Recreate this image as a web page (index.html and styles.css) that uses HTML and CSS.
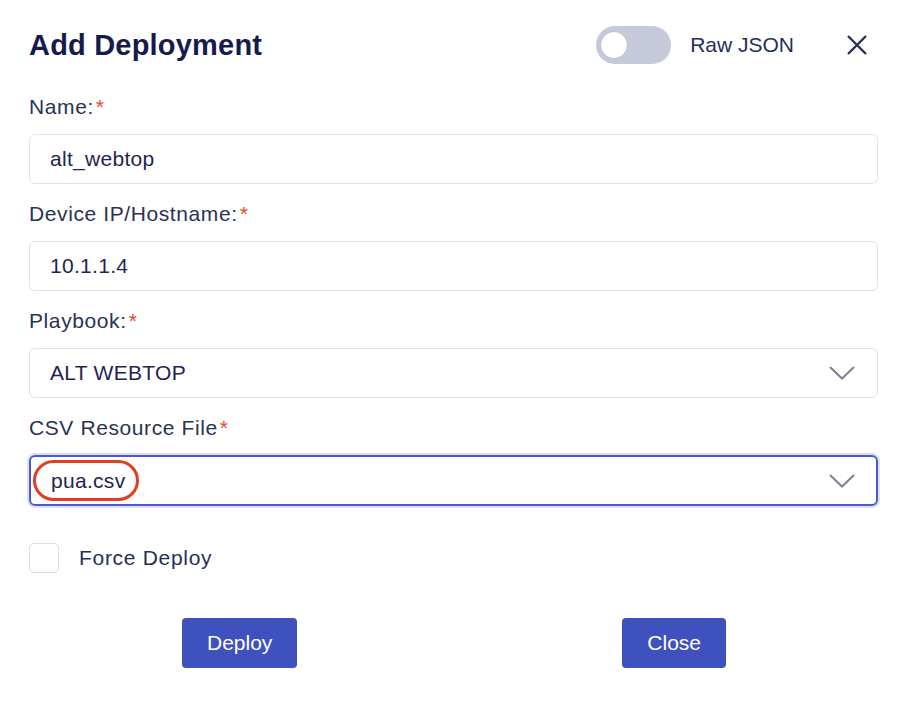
FILE: index.html
```html
<!DOCTYPE html>
<html lang="en">
<head>
<meta charset="utf-8">
<title>Add Deployment</title>
<link rel="stylesheet" href="styles.css">
</head>
<body>
<div class="dialog">
  <header class="header">
    <h1 class="title">Add Deployment</h1>
    <div class="header-tools">
      <span class="toggle"><span class="knob"></span></span>
      <span class="toggle-label">Raw JSON</span>
      <svg class="close-icon" width="22" height="22" viewBox="0 0 22 22" aria-label="Close">
        <path d="M2 2 L20 20 M20 2 L2 20" stroke="#283058" stroke-width="2.4" stroke-linecap="butt" fill="none"/>
      </svg>
    </div>
  </header>

  <div class="field">
    <label class="label">Name:<span class="req">*</span></label>
    <input class="input" type="text" value="alt_webtop">
  </div>

  <div class="field">
    <label class="label">Device IP/Hostname:<span class="req">*</span></label>
    <input class="input" type="text" value="10.1.1.4">
  </div>

  <div class="field">
    <label class="label">Playbook:<span class="req">*</span></label>
    <div class="select">
      <span class="select-value">ALT WEBTOP</span>
      <svg class="chevron" width="26" height="14" viewBox="0 0 26 14"><path d="M1 1 L13 12.5 L25 1" stroke="#7d8197" stroke-width="2" fill="none"/></svg>
    </div>
  </div>

  <div class="field">
    <label class="label">CSV Resource File<span class="req">*</span></label>
    <div class="select select-focused">
      <span class="select-value circled">pua.csv</span>
      <svg class="chevron" width="26" height="14" viewBox="0 0 26 14"><path d="M1 1 L13 12.5 L25 1" stroke="#7d8197" stroke-width="2" fill="none"/></svg>
    </div>
  </div>

  <div class="check-row">
    <span class="checkbox"></span>
    <span class="check-label">Force Deploy</span>
  </div>

  <div class="actions">
    <button class="btn">Deploy</button>
    <button class="btn">Close</button>
  </div>
</div>
</body>
</html>
```

FILE: styles.css
```css
* { box-sizing: border-box; }

html, body {
  margin: 0;
  padding: 0;
  background: #ffffff;
}

body {
  font-family: "Liberation Sans", Arial, sans-serif;
  font-size: 21px;
  color: #2b3256;
}

.dialog {
  padding: 26px 24px 0 29px;
}

.header {
  display: flex;
  align-items: center;
  height: 38px;
  margin-bottom: 29px;
}

.title {
  margin: 0;
  font-size: 29px;
  line-height: 38px;
  font-weight: bold;
  letter-spacing: 0.2px;
  color: #161b4c;
  flex: 1;
}

.header-tools {
  display: flex;
  align-items: center;
  margin-right: 10px;
}

.toggle {
  position: relative;
  width: 75px;
  height: 38px;
  border-radius: 19px;
  background: #c6c9da;
  display: inline-block;
}

.knob {
  position: absolute;
  left: 5px;
  top: 6px;
  width: 26px;
  height: 26px;
  border-radius: 50%;
  background: #ffffff;
  box-shadow: 0 0 1px rgba(60, 66, 110, 0.4);
}

.toggle-label {
  margin-left: 19px;
  color: #262e5a;
  line-height: 28px;
}

.close-icon {
  margin-left: 52px;
  display: block;
}

.field {
  margin-bottom: 16px;
}

.label {
  display: block;
  line-height: 28px;
  margin-bottom: 13px;
  letter-spacing: 0.6px;
  color: #2b3256;
}

.req {
  color: #e34a2c;
  margin-left: 2px;
}

.input {
  display: block;
  width: 100%;
  height: 50px;
  border: 1px solid #e1e2ea;
  border-radius: 6px;
  padding: 0 0 0 20px;
  font-family: inherit;
  font-size: 21px;
  letter-spacing: 0.3px;
  color: #1f2550;
  background: #fff;
  outline: none;
}

.select {
  display: flex;
  align-items: center;
  justify-content: space-between;
  height: 50px;
  border: 1px solid #e1e2ea;
  border-radius: 6px;
  padding: 0 22px 0 20px;
  letter-spacing: 0.3px;
  color: #1f2550;
}

.select-focused {
  border: 2px solid #4a59cf;
  padding: 0 21px 0 2px;
  box-shadow: 0 0 0 2px rgba(74, 89, 207, 0.18);
  height: 51px;
}

.circled {
  display: inline-block;
  border: 3px solid #e0401f;
  border-radius: 21px;
  padding: 0 11px 0 15px;
  line-height: 35px;
}

.chevron {
  display: block;
}

.check-row {
  display: flex;
  align-items: center;
  margin-top: 37px;
}

.checkbox {
  width: 30px;
  height: 30px;
  border: 1px solid #dcdee6;
  border-radius: 5px;
  display: inline-block;
}

.check-label {
  margin-left: 20px;
  letter-spacing: 0.7px;
  color: #262e5a;
}

.actions {
  display: flex;
  justify-content: space-between;
  margin-top: 45px;
  padding: 0 152px 0 153px;
}

.btn {
  height: 50px;
  padding: 0 25px;
  border: none;
  border-radius: 4px;
  background: #3f50bf;
  color: #ffffff;
  font-family: inherit;
  font-size: 21px;
}
```
